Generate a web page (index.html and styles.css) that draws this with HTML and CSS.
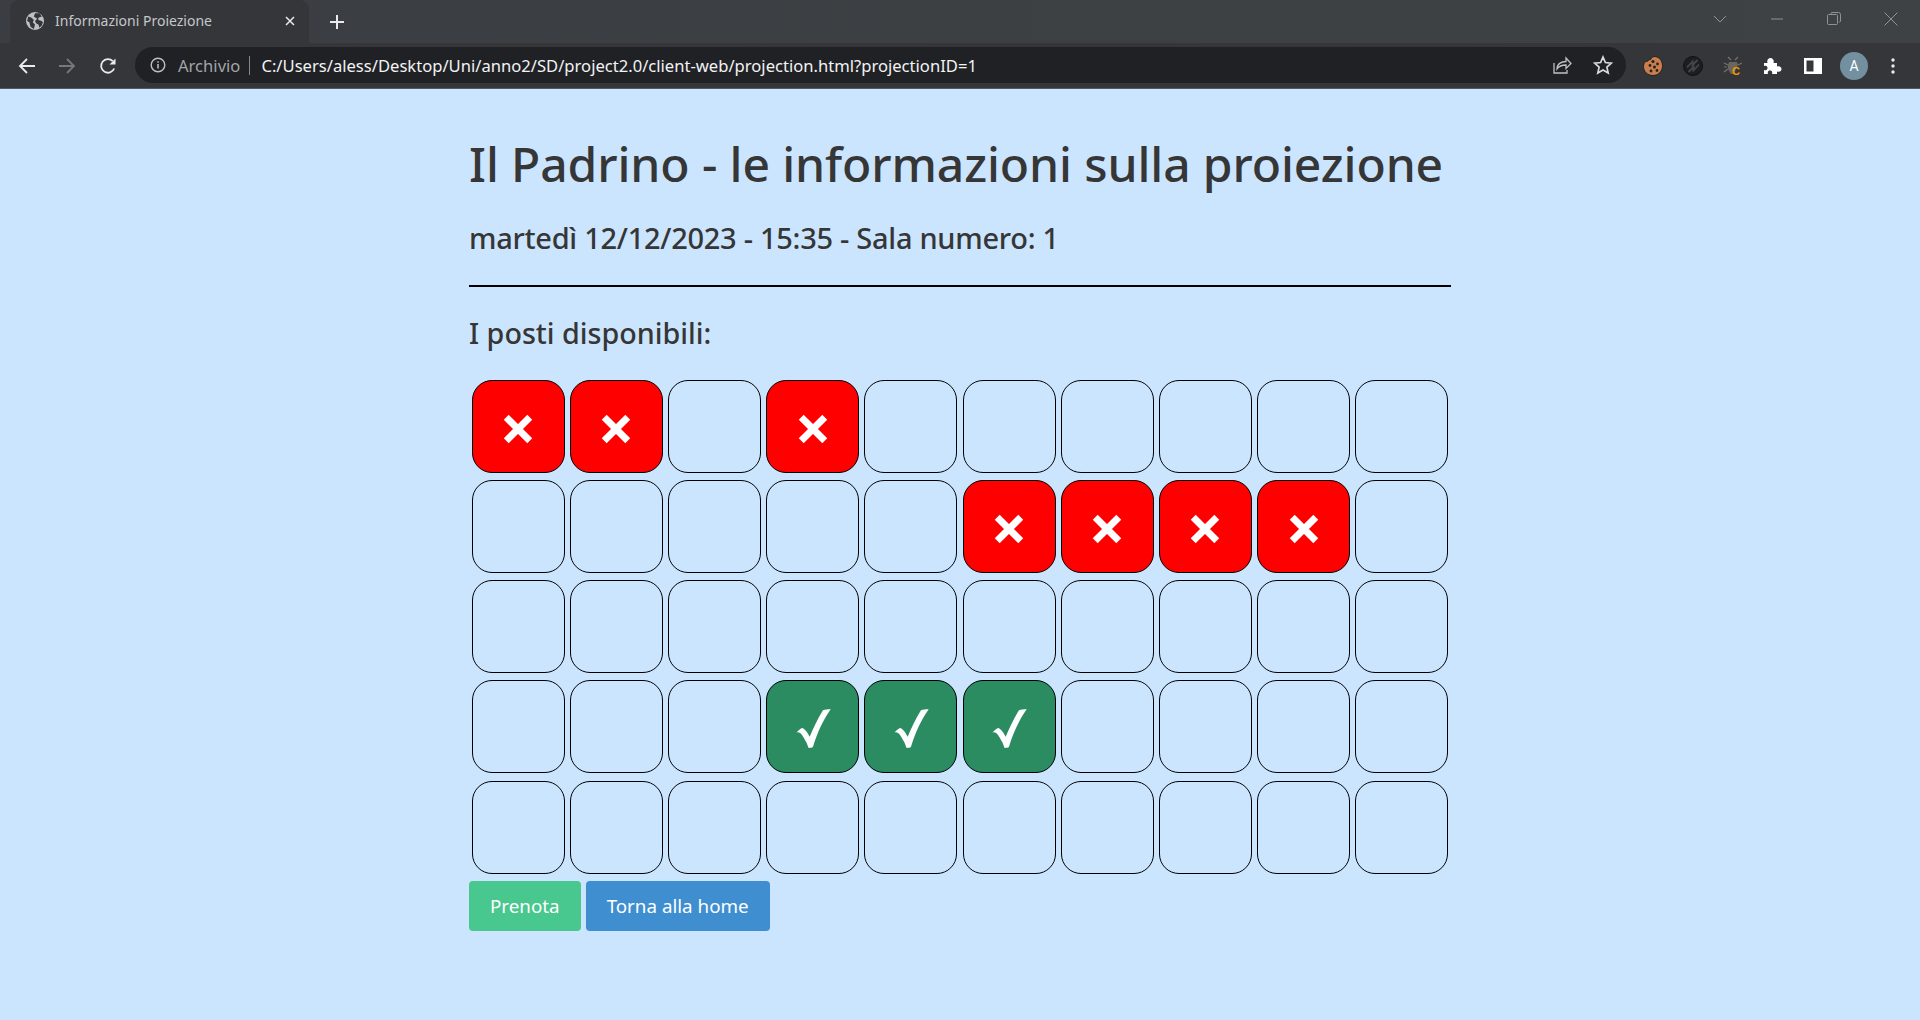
FILE: index.html
```html
<!DOCTYPE html>
<html lang="it">
<head>
<meta charset="utf-8">
<title>Informazioni Proiezione</title>
<link rel="stylesheet" href="styles.css">
</head>
<body>
<header class="browser">
  <div class="tabstrip">
    <div class="tab">
      <svg class="favicon" viewBox="0 0 16 16"><circle cx="8" cy="8" r="8" fill="#bdc1c6"/><path d="M2 4l3 1 2 2-1 2 2 2-1 4-3-2-1-4-2-1zM8 1h4l2 3-3 1v2l3 1 1 1-1 3-2 2-1-3-2-1-1-2 2-2-3-2z" fill="#35363a"/></svg>
      <span class="tab-title">Informazioni Proiezione</span>
      <svg class="tab-close" viewBox="0 0 10 10"><path d="M1 1l8 8M9 1l-8 8" stroke="#e8eaed" stroke-width="1.5"/></svg>
    </div>
    <svg class="new-tab" viewBox="0 0 16 16"><path d="M8 1v14M1 8h14" stroke="#e8eaed" stroke-width="2"/></svg>
    <div class="window-controls">
      <svg viewBox="0 0 16 16"><path d="M2 5l6 6 6-6" fill="none" stroke="#8f9296"/></svg>
      <svg viewBox="0 0 16 16"><path d="M2 8h12" stroke="#8f9296"/></svg>
      <svg viewBox="0 0 16 16"><path d="M5 3V2.500Q5 1.500 6 1.500h6.500q2 0 2 2V10q0 1-1 1h-.5M2.500 3.500h8q1 0 1 1v8q0 1-1 1h-8q-1 0-1-1v-8q0-1 1-1z" fill="none" stroke="#8f9296"/></svg>
      <svg viewBox="0 0 16 16"><path d="M1.500 1.500l13 13M14.500 1.500l-13 13" stroke="#8f9296"/></svg>
    </div>
  </div>
  <div class="toolbar">
    <svg class="nav-icon" viewBox="0 0 18 18"><path d="M17 9H2M9 2L2 9l7 7" fill="none" stroke="#e8eaed" stroke-width="1.800"/></svg>
    <svg class="nav-icon" viewBox="0 0 18 18"><path d="M1 9h15M9 2l7 7-7 7" fill="none" stroke="#74777b" stroke-width="1.800"/></svg>
    <svg class="nav-icon" viewBox="0 0 18 18"><path d="M15.200 11.500A6.800 6.800 0 1 1 13.800 4.200" fill="none" stroke="#e8eaed" stroke-width="1.800"/><path d="M16.500 1.500v6h-6z" fill="#e8eaed"/></svg>
    <div class="omnibox">
      <svg class="info" viewBox="0 0 16 16"><circle cx="8" cy="8" r="6.800" fill="none" stroke="#bdc1c6" stroke-width="1.400"/><path d="M8 7v4.500M8 4.200v1.600" stroke="#bdc1c6" stroke-width="1.500"/></svg>
      <span class="scheme">Archivio</span>
      <span class="separator"></span>
      <span class="url">C:/Users/aless/Desktop/Uni/anno2/SD/project2.0/client-web/projection.html?projectionID=1</span>
      <svg class="omni-icon share" viewBox="0 0 20 20"><path d="M2 8v10h13v-3M5 14c0-5 4-7.500 9-7.500V3l5 5.500-5 5V10c-4 0-7 1-9 4z" fill="none" stroke="#bdc1c6" stroke-width="1.300"/></svg>
      <svg class="omni-icon star" viewBox="0 0 20 20"><path d="M10 2l2.400 5.500 6 .6-4.500 4 1.300 5.900-5.200-3-5.200 3 1.300-5.900-4.500-4 6-.6z" fill="none" stroke="#d7dade" stroke-width="1.700"/></svg>
    </div>
    <div class="extensions">
      <svg viewBox="0 0 20 20"><path d="M11 .5c5 0 8.500 4 8.500 9.300S15.500 19.500 10 19.500 .5 15.500.5 10.500c0-2.300 1-4 2.500-5.500 1 .7 2 .5 2.500-.5.500-1 1.500-1 2-.8C8 2.500 9.500.5 11 .5z" fill="#c87e4f" stroke="#2b211b"/><circle cx="10" cy="5.500" r="1.600" fill="#2b211b"/><circle cx="14.500" cy="8" r="1.400" fill="#2b211b"/><circle cx="7" cy="9.500" r="1.400" fill="#2b211b"/><circle cx="11.500" cy="11" r="1.500" fill="#2b211b"/><circle cx="8" cy="15" r="1.400" fill="#2b211b"/><circle cx="14" cy="14.500" r="1.400" fill="#2b211b"/></svg>
      <svg viewBox="0 0 20 20"><circle cx="10" cy="10" r="9.500" fill="#1d1e20" stroke="#111"/><path d="M4 11.500l5.500-6v3.500L14.500 4M16 8.500l-5.500 6v-3.500L5.500 16" fill="none" stroke="#45484b" stroke-width="1.800"/></svg>
      <svg class="bug" viewBox="0 0 20 20"><path d="M5 1l3 3M15 1l-3 3M1 7l4 2M19 7l-4 2M1 16l4-3M4 11H1" fill="none" stroke="#77716a" stroke-width="1.200"/><path d="M6 6h8l1 3-2 4-2 5H8l-3-5V9z" fill="#6a655f"/><text x="9" y="19" class="bug-c">C</text></svg>
      <svg class="puzzle" viewBox="0 0 20 20"><path d="M2 7h3.500c-1-3 1-5 3-5s4 2 3 5H15v3.500c3-1 4.500.8 4.500 2.500S18 16.500 15 15.500V18H10c.8-2.500-.5-3.500-2-3.500S5.200 15.500 6 18H2v-4c2.500.8 3.500-.5 3.500-2S4.500 9 2 10z" fill="#fff"/></svg>
      <svg class="panel" viewBox="0 0 20 20"><path d="M1 2h18v16H1zM3.500 4.500v11h7v-11z" fill="#fff" fill-rule="evenodd"/></svg>
      <span class="avatar">A</span>
      <svg class="dots" viewBox="0 0 4 16"><circle cx="2" cy="2" r="1.700" fill="#e8eaed"/><circle cx="2" cy="8" r="1.700" fill="#e8eaed"/><circle cx="2" cy="14" r="1.700" fill="#e8eaed"/></svg>
    </div>
  </div>
</header>
<main class="page">
  <h1 class="title">Il Padrino - le informazioni sulla proiezione</h1>
  <h2 class="subtitle">martedì 12/12/2023 - 15:35 - Sala numero: 1</h2>
  <hr class="rule">
  <h3 class="section">I posti disponibili:</h3>
  <div class="seats">
    <div class="seat taken"><svg class="mark" viewBox="0 0 28 28"><path d="M3 3l22 22M25 3L3 25"/></svg></div>
    <div class="seat taken"><svg class="mark" viewBox="0 0 28 28"><path d="M3 3l22 22M25 3L3 25"/></svg></div>
    <div class="seat"></div>
    <div class="seat taken"><svg class="mark" viewBox="0 0 28 28"><path d="M3 3l22 22M25 3L3 25"/></svg></div>
    <div class="seat"></div><div class="seat"></div><div class="seat"></div><div class="seat"></div><div class="seat"></div><div class="seat"></div>

    <div class="seat"></div><div class="seat"></div><div class="seat"></div><div class="seat"></div><div class="seat"></div>
    <div class="seat taken"><svg class="mark" viewBox="0 0 28 28"><path d="M3 3l22 22M25 3L3 25"/></svg></div>
    <div class="seat taken"><svg class="mark" viewBox="0 0 28 28"><path d="M3 3l22 22M25 3L3 25"/></svg></div>
    <div class="seat taken"><svg class="mark" viewBox="0 0 28 28"><path d="M3 3l22 22M25 3L3 25"/></svg></div>
    <div class="seat taken"><svg class="mark" viewBox="0 0 28 28"><path d="M3 3l22 22M25 3L3 25"/></svg></div>
    <div class="seat"></div>

    <div class="seat"></div><div class="seat"></div><div class="seat"></div><div class="seat"></div><div class="seat"></div><div class="seat"></div><div class="seat"></div><div class="seat"></div><div class="seat"></div><div class="seat"></div>

    <div class="seat"></div><div class="seat"></div><div class="seat"></div>
    <div class="seat chosen"><svg class="tick" viewBox="0 0 34 38"><path d="M2 23c3-1 5 1 9 9L13 37c2 0 3 0 4-1C21 23 26 12 33 2c-3 0-5 0-7 1-5 8-9 17-12 24-2-4-5-8-7-8-2 1-4 3-5 4z"/></svg></div>
    <div class="seat chosen"><svg class="tick" viewBox="0 0 34 38"><path d="M2 23c3-1 5 1 9 9L13 37c2 0 3 0 4-1C21 23 26 12 33 2c-3 0-5 0-7 1-5 8-9 17-12 24-2-4-5-8-7-8-2 1-4 3-5 4z"/></svg></div>
    <div class="seat chosen"><svg class="tick" viewBox="0 0 34 38"><path d="M2 23c3-1 5 1 9 9L13 37c2 0 3 0 4-1C21 23 26 12 33 2c-3 0-5 0-7 1-5 8-9 17-12 24-2-4-5-8-7-8-2 1-4 3-5 4z"/></svg></div>
    <div class="seat"></div><div class="seat"></div><div class="seat"></div><div class="seat"></div>

    <div class="seat"></div><div class="seat"></div><div class="seat"></div><div class="seat"></div><div class="seat"></div><div class="seat"></div><div class="seat"></div><div class="seat"></div><div class="seat"></div><div class="seat"></div>
  </div>
  <div class="actions">
    <button class="btn btn-book">Prenota</button>
    <button class="btn btn-home">Torna alla home</button>
  </div>
</main>
</body>
</html>
```
FILE: styles.css
```css
* { box-sizing: border-box; }
html, body { margin: 0; height: 100%; }
body {
  background: #cce5ff;
  color: #363636;
  font-family: "Noto Sans", "Open Sans", sans-serif;
  overflow: hidden;
}
.browser { height: 89px; background: #35363a; border-bottom: 1px solid #55585c; }
.tabstrip {
  height: 43px;
  display: flex;
  align-items: stretch;
  padding-left: 10px;
  background: linear-gradient(90deg, #3a3d41, #3e4245);
}
.tab {
  width: 299px;
  background: #35363a;
  border-radius: 9px 9px 0 0;
  display: flex;
  align-items: center;
  padding: 0 0 2px 16px;
}
.favicon { width: 18px; height: 18px; }
.tab-title {
  margin-left: 11px;
  font: 14px "Noto Sans", sans-serif;
  color: #c4c7cb;
  width: 230px;
  white-space: nowrap;
}
.tab-close { width: 10px; height: 10px; }
.new-tab { width: 16px; height: 16px; margin: 14px 0 0 20px; }
.window-controls {
  margin-left: auto;
  display: flex;
  gap: 41px;
  padding: 11px 21px 0 0;
}
.window-controls svg { width: 16px; height: 16px; }
.toolbar { height: 45px; display: flex; align-items: center; padding-left: 18px; }
.nav-icon { width: 18px; height: 18px; margin-right: 22px; }
.nav-icon:nth-child(2) { margin-right: 23px; }
.nav-icon:nth-child(3) { margin-right: 18px; }
.omnibox {
  width: 1491px;
  height: 36px;
  margin-top: -1px;
  background: #202124;
  border-radius: 18px;
  display: flex;
  align-items: center;
  padding-left: 15px;
  font-family: "Noto Sans", sans-serif;
  font-size: 16.600px;
}
.info { width: 16px; height: 16px; }
.scheme { margin-left: 12px; color: #a2a5a9; }
.separator { width: 1px; height: 19px; background: #85888c; margin: 0 11px 0 9px; }
.url { color: #f1f3f4; white-space: nowrap; }
.omni-icon { width: 20px; height: 20px; }
.share { margin-left: auto; }
.star { margin: 0 13px 0 21px; }
.extensions { display: flex; align-items: center; margin-left: 17px; }
.extensions svg { width: 20px; height: 20px; margin-right: 20px; flex: none; }
.extensions .bug { margin-right: 19px; }
.extensions .puzzle { margin-right: 21px; }
.extensions .panel { margin-right: 17px; }
.extensions .dots { width: 4px; height: 16px; margin: 0 0 0 23px; }
.bug-c { font: bold 11px "Liberation Sans", sans-serif; fill: #f29900; }
.avatar {
  width: 28px;
  height: 28px;
  border-radius: 50%;
  background: #72909f;
  color: #fff;
  font: 14px/28px "Roboto", sans-serif;
  text-align: center;
}
.page { width: 982px; margin: 0 auto; }
.title { margin: 41px 0 0; font-size: 48px; line-height: 68px; font-weight: 500; letter-spacing: -0.11px; white-space: nowrap; }
.subtitle { margin: 20px 0 0; font-size: 29px; line-height: 40px; font-weight: 500; letter-spacing: -0.28px; white-space: nowrap; }
.rule { margin: 27px 0 0; height: 2px; border: 0; background: #000; }
.section { margin: 26px 0 0; font-size: 28.700px; line-height: 40px; font-weight: 500; }
.seats {
  margin-top: 27px;
  display: grid;
  grid-template-columns: repeat(10, 1fr);
  justify-items: center;
  row-gap: 7.150px;
}
.seat {
  width: 93px;
  height: 93px;
  border: 1px solid #000;
  border-radius: 20px;
  display: flex;
  align-items: center;
  justify-content: center;
}
.taken { background: #f00; }
.chosen { background: #2a8c60; }
.mark { width: 30px; height: 30px; margin-top: 4px; }
.mark path { fill: none; stroke: #fff; stroke-width: 6.500; }
.tick { width: 38px; height: 42px; margin-top: 3px; }
.tick path { fill: #fff; }
.actions { display: flex; gap: 5px; margin-top: 7px; }
.btn {
  height: 50px;
  padding: 0 21px;
  border: 0;
  border-radius: 4px;
  color: #fff;
  font: 18.800px "Noto Sans", sans-serif;
}
.btn-book { background: #48c78e; }
.btn-home { background: #3e8ed0; }
```
